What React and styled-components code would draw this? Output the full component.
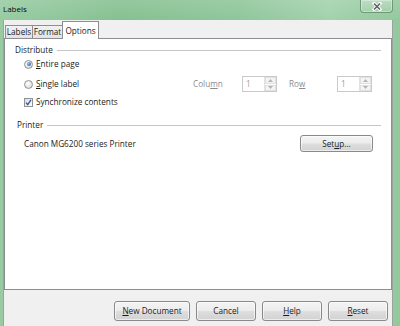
import React from "react";
import styled, { createGlobalStyle, css } from "styled-components";

const GlobalStyle = createGlobalStyle`
  html, body {
    margin: 0;
    padding: 0;
    background: #8fc69a;
  }
  body {
    font-family: "Open Sans", "Noto Sans", sans-serif;
    font-size: 8.2px;
    color: #1b1b1b;
  }
`;

function Mn({ children }) {
  return <U>{children}</U>;
}

function Radio({ checked }) {
  return (
    <RadioRing>
      {checked && <RadioDot />}
    </RadioRing>
  );
}

function Check() {
  return (
    <CheckBox>
      <svg width="9" height="9" viewBox="0 0 9 9">
        <path d="M2 4.6 L3.7 6.6 L7 1.8" fill="none" stroke="#2f55a4" strokeWidth="1.3" />
      </svg>
    </CheckBox>
  );
}

function Spin({ value }) {
  return (
    <SpinBox>
      <SpinValue>{value}</SpinValue>
      <SpinArrows>
        <SpinHalf>
          <svg width="5" height="3" viewBox="0 0 5 3"><path d="M0 3 L2.5 0 L5 3Z" fill="#b5b5b5" /></svg>
        </SpinHalf>
        <SpinHalf>
          <svg width="5" height="3" viewBox="0 0 5 3"><path d="M0 0 L2.5 3 L5 0Z" fill="#b5b5b5" /></svg>
        </SpinHalf>
      </SpinArrows>
    </SpinBox>
  );
}

export default function App() {
  return (
    <>
      <GlobalStyle />
      <Window>
        <TitleBar>
          <Title>Labels</Title>
          <CloseButton>
            <svg width="10" height="9" viewBox="0 0 10 9">
              <path d="M2 1.5 L8 7.5 M8 1.5 L2 7.5" stroke="#ffffff" strokeWidth="3.2" strokeLinecap="square" />
              <path d="M2 1.5 L8 7.5 M8 1.5 L2 7.5" stroke="#5d6266" strokeWidth="1.6" />
            </svg>
          </CloseButton>
        </TitleBar>
        <Body>
          <TabStrip>
            <Tab $w={28}>Labels</Tab>
            <Tab $w={31}>Format</Tab>
            <Tab $w={37} $active>Options</Tab>
          </TabStrip>
          <Panel>
            <Section $top={4}>
              <SectionTitle>Distribute</SectionTitle>
              <Rule />
            </Section>
            <Row $h={14}>
              <Radio checked />
              <Label><Mn>E</Mn>ntire page</Label>
            </Row>
            <Row $h={16} $top={5}>
              <RadioCell>
                <Radio />
                <Label><Mn>S</Mn>ingle label</Label>
              </RadioCell>
              <FieldLabel $w={49}>Colu<Mn>m</Mn>n</FieldLabel>
              <Spin value="1" />
              <FieldLabel $w={48} $gap={12}>Ro<Mn>w</Mn></FieldLabel>
              <Spin value="1" />
            </Row>
            <Row $h={14} $top={3}>
              <Check />
              <Label>Synchronize contents</Label>
            </Row>
            <Section $top={9} $indent={2}>
              <SectionTitle>Printer</SectionTitle>
              <Rule />
            </Section>
            <Row $h={17} $top={3}>
              <Label $flush>Canon MG6200 series Printer</Label>
              <Button $w={73} $h={17} $push>Set<Mn>u</Mn>p...</Button>
            </Row>
          </Panel>
          <Footer>
            <Button $w={76}><Mn>N</Mn>ew Document</Button>
            <Button $w={60}>Cancel</Button>
            <Button $w={60}><Mn>H</Mn>elp</Button>
            <Button $w={60}><Mn>R</Mn>eset</Button>
          </Footer>
        </Body>
      </Window>
    </>
  );
}

const Window = styled.div`
  width: 400px;
  height: 326px;
  display: flex;
  flex-direction: column;
  overflow: hidden;
  background: linear-gradient(90deg, #98cba2 0%, #86c091 30%, #8fc69a 60%, #a3d2ad 82%, #93c89d 100%);
`;

const TitleBar = styled.div`
  height: 20px;
  flex-shrink: 0;
  display: flex;
  align-items: flex-start;
  justify-content: space-between;
  background: linear-gradient(180deg, rgba(255, 255, 255, 0.12), rgba(255, 255, 255, 0));
`;

const Title = styled.div`
  padding: 3px 0 0 3px;
  font-size: 8px;
  line-height: 12px;
  color: #0a0a0a;
`;

const CloseButton = styled.div`
  width: 31px;
  height: 12px;
  margin-right: 7px;
  border: 1px solid #6f9a77;
  border-top: none;
  border-radius: 0 0 4px 4px;
  background: linear-gradient(180deg, rgba(255, 255, 255, 0.25), rgba(255, 255, 255, 0.05));
  box-shadow: inset 0 0 0 1px rgba(255, 255, 255, 0.35);
  display: flex;
  align-items: center;
  justify-content: center;
`;

const Body = styled.div`
  flex: 1;
  margin: 0 7px 0 3px;
  border-left: 1px solid #9aa39c;
  border-right: 1px solid #9aa39c;
  background: #f0f0f0;
  display: flex;
  flex-direction: column;
`;

const TabStrip = styled.div`
  height: 18px;
  display: flex;
  align-items: flex-end;
  padding-left: 1px;
  position: relative;
  z-index: 1;
`;

const Tab = styled.div`
  width: ${(p) => p.$w}px;
  height: 13px;
  box-sizing: border-box;
  border: 1px solid #8c8e94;
  border-bottom: none;
  margin-right: -1px;
  background: linear-gradient(180deg, #f2f2f2, #e3e3e3);
  display: flex;
  align-items: center;
  justify-content: center;
  line-height: 12px;
  ${(p) =>
    p.$active &&
    css`
      height: 18px;
      margin-bottom: -1px;
      background: #ffffff;
      align-items: flex-start;
      padding-top: 3px;
    `}
`;

const Panel = styled.div`
  height: 252px;
  box-sizing: border-box;
  border: 1px solid #8c8e94;
  background: #ffffff;
  padding: 0 10px 0 10px;
  display: flex;
  flex-direction: column;
`;

const Section = styled.div`
  height: 14px;
  margin-top: ${(p) => p.$top || 0}px;
  padding-left: ${(p) => p.$indent || 0}px;
  display: flex;
  align-items: center;
  gap: 4px;
`;

const SectionTitle = styled.span`
  line-height: 12px;
`;

const Rule = styled.div`
  flex: 1;
  height: 1px;
  background: #c6c6c6;
  margin-top: 1px;
`;

const Row = styled.div`
  height: ${(p) => p.$h}px;
  margin-top: ${(p) => p.$top || 0}px;
  padding-left: 9px;
  display: flex;
  align-items: center;
`;

const RadioCell = styled.div`
  width: 169px;
  display: flex;
  align-items: center;
`;

const Label = styled.span`
  line-height: 12px;
  margin-left: ${(p) => (p.$flush ? 0 : 3)}px;
  white-space: nowrap;
`;

const U = styled.span`
  text-decoration: underline;
  text-underline-offset: 1px;
`;

const RadioRing = styled.span`
  width: 9px;
  height: 9px;
  box-sizing: border-box;
  border-radius: 50%;
  border: 1px solid #8f9396;
  background: radial-gradient(circle at 40% 35%, #ffffff 0%, #e4e4e4 60%, #cfd2d4 100%);
  display: flex;
  align-items: center;
  justify-content: center;
  flex-shrink: 0;
`;

const RadioDot = styled.span`
  width: 4px;
  height: 4px;
  border-radius: 50%;
  background: radial-gradient(circle at 35% 35%, #8fc3ef, #2a62a8 80%);
`;

const CheckBox = styled.span`
  width: 9px;
  height: 9px;
  box-sizing: border-box;
  border: 1px solid #8f9396;
  background: linear-gradient(135deg, #dcdcdc, #ffffff);
  display: flex;
  align-items: center;
  justify-content: center;
  flex-shrink: 0;
  & svg {
    margin: -1px;
  }
`;

const FieldLabel = styled.span`
  width: ${(p) => p.$w}px;
  margin-left: ${(p) => p.$gap || 0}px;
  color: #8d8d8d;
  line-height: 12px;
`;

const SpinBox = styled.div`
  width: 35px;
  height: 16px;
  box-sizing: border-box;
  border: 1px solid #cacaca;
  background: #ffffff;
  display: flex;
`;

const SpinValue = styled.span`
  flex: 1;
  padding-left: 3px;
  color: #9c9c9c;
  line-height: 14px;
`;

const SpinArrows = styled.div`
  width: 11px;
  display: flex;
  flex-direction: column;
  gap: 1px;
  padding: 0 0 0 0;
  border-left: 1px solid #e2e2e2;
`;

const SpinHalf = styled.div`
  flex: 1;
  background: #f4f4f4;
  border: 1px solid #e0e0e0;
  display: flex;
  align-items: center;
  justify-content: center;
`;

const Button = styled.div`
  width: ${(p) => p.$w}px;
  height: ${(p) => p.$h || 20}px;
  box-sizing: border-box;
  margin-left: ${(p) => (p.$push ? "auto" : "0")};
  margin-right: ${(p) => (p.$push ? "8px" : "0")};
  border: 1px solid #8a8a8a;
  border-radius: 3px;
  background: linear-gradient(180deg, #f4f4f4 0%, #ececec 48%, #dedede 52%, #d2d2d2 100%);
  box-shadow: inset 0 0 0 1px rgba(255, 255, 255, 0.6);
  display: flex;
  align-items: center;
  justify-content: center;
  line-height: 12px;
  white-space: nowrap;
`;

const Footer = styled.div`
  display: flex;
  justify-content: flex-end;
  gap: 6px;
  padding: 11px 4px 0 0;
`;
